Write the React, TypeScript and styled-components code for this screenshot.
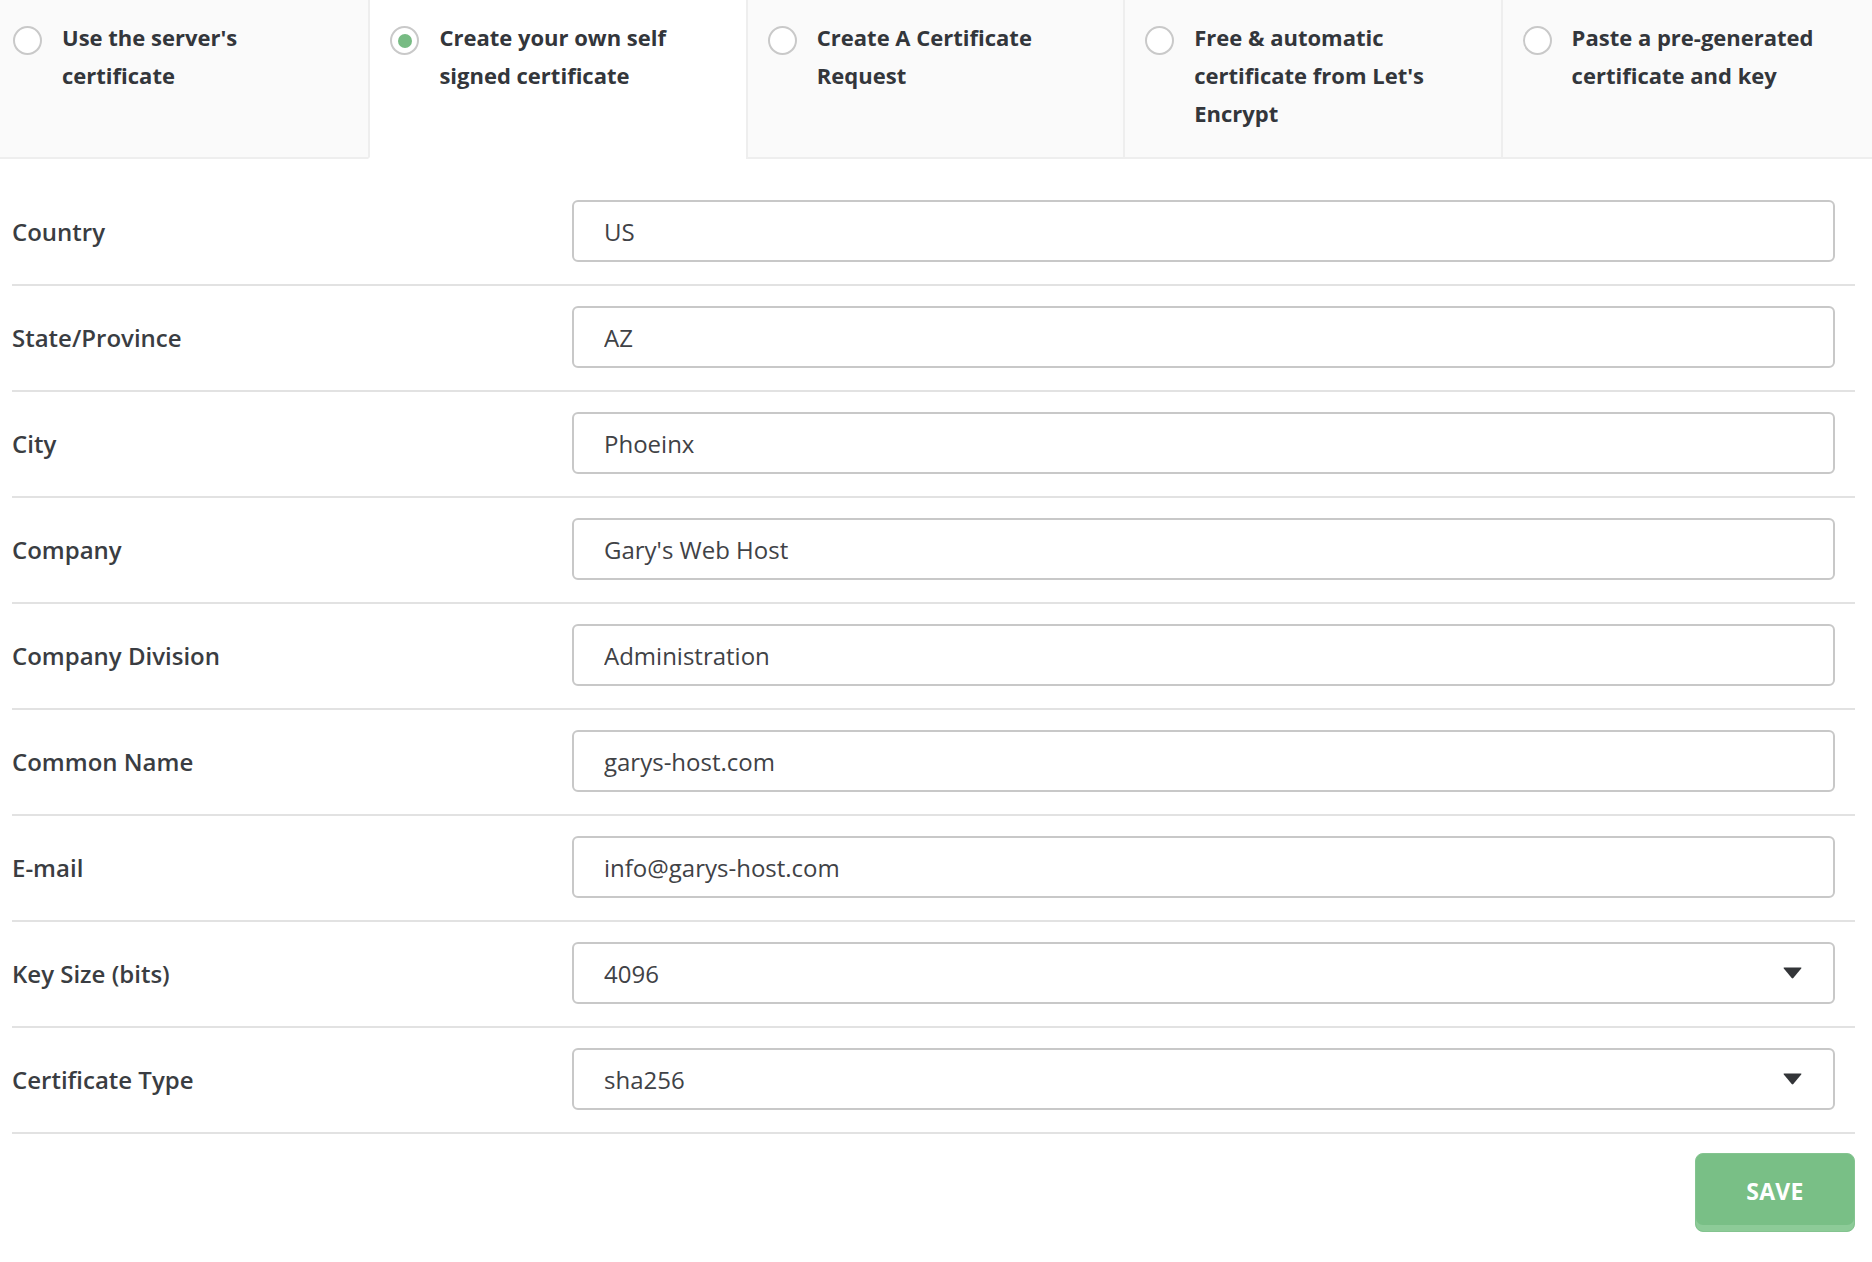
import React from "react";
import styled, { createGlobalStyle } from "styled-components";

const Global = createGlobalStyle`
  html, body { margin: 0; padding: 0; background: #ffffff; overflow: hidden; }
  body { font-family: "Open Sans", "Noto Sans", "Liberation Sans", sans-serif; color: #35383d; }
  * { box-sizing: border-box; }
`;

const Page = styled.div`
  width: 1872px;
  display: flex;
  flex-direction: column;
`;

const Tabs = styled.div`
  display: grid;
  grid-template-columns: repeat(5, 1fr);
  margin: 0 -6px 0 -9px;
`;

const Tab = styled.label<{ $active?: boolean }>`
  display: flex;
  align-items: flex-start;
  gap: 20px;
  padding: 18px 30px 25px 20px;
  background: ${(p) => (p.$active ? "#ffffff" : "#fafafa")};
  border-left: 2px solid #eeeeee;
  border-bottom: 2px solid ${(p) => (p.$active ? "transparent" : "#eeeeee")};
  cursor: pointer;
`;

const Radio = styled.span<{ $checked?: boolean }>`
  flex: 0 0 29px;
  width: 29px;
  height: 29px;
  margin-top: 8px;
  border-radius: 50%;
  border: 2px solid #c9c9c9;
  background: #ffffff;
  display: flex;
  align-items: center;
  justify-content: center;
  &::after {
    content: "";
    width: 14px;
    height: 14px;
    border-radius: 50%;
    background: ${(p) => (p.$checked ? "#77bb83" : "transparent")};
  }
`;

const TabText = styled.span`
  font-size: 22px;
  line-height: 38px;
  font-weight: 700;
  color: #33363b;
`;

const Form = styled.div`
  display: flex;
  flex-direction: column;
  padding: 21px 17px 0 12px;
`;

const Row = styled.div`
  display: grid;
  grid-template-columns: 560px 1fr;
  align-items: center;
  padding: 20px 20px 22px 0;
  border-bottom: 2px solid #e2e2e2;
`;

const Label = styled.div`
  font-size: 24px;
  font-weight: 600;
  color: #3a3d42;
`;

const Input = styled.input`
  width: 100%;
  height: 62px;
  border: 2px solid #c8c8c8;
  border-radius: 6px;
  padding: 0 30px;
  font-family: inherit;
  font-size: 24px;
  color: #3f4246;
  background: #ffffff;
  outline: none;
`;

const Select = styled.div`
  width: 100%;
  height: 62px;
  border: 2px solid #c8c8c8;
  border-radius: 6px;
  padding: 0 31px 0 30px;
  font-size: 24px;
  color: #3f4246;
  background: #ffffff;
  display: flex;
  align-items: center;
  justify-content: space-between;
`;

const Actions = styled.div`
  display: flex;
  justify-content: flex-end;
  padding-top: 19px;
`;

const SaveButton = styled.button`
  width: 160px;
  height: 79px;
  border: 1px solid #84c490;
  border-radius: 8px;
  background: #79bf86;
  box-shadow: inset 0 -6px 0 #8dcb98;
  color: #ffffff;
  font-family: inherit;
  font-size: 23px;
  font-weight: 700;
  letter-spacing: 0.3px;
  padding: 0 0 4px;
  cursor: pointer;
`;

const Caret = () => (
  <svg width="19" height="12" viewBox="0 0 19 12" aria-hidden="true">
    <path d="M1.2 0.5 H17.8 Q19 0.5 18.2 1.5 L10.3 11 Q9.5 11.8 8.7 11 L0.8 1.5 Q0 0.5 1.2 0.5 Z" fill="#333538" />
  </svg>
);

const tabs = [
  "Use the server's certificate",
  "Create your own self signed certificate",
  "Create A Certificate Request",
  "Free & automatic certificate from Let's Encrypt",
  "Paste a pre-generated certificate and key",
];

type Field = { label: string; value: string; select?: boolean };

const fields: Field[] = [
  { label: "Country", value: "US" },
  { label: "State/Province", value: "AZ" },
  { label: "City", value: "Phoeinx" },
  { label: "Company", value: "Gary's Web Host" },
  { label: "Company Division", value: "Administration" },
  { label: "Common Name", value: "garys-host.com" },
  { label: "E-mail", value: "info@garys-host.com" },
  { label: "Key Size (bits)", value: "4096", select: true },
  { label: "Certificate Type", value: "sha256", select: true },
];

export default function App() {
  return (
    <Page>
      <Global />
      <Tabs>
        {tabs.map((t, i) => (
          <Tab key={t} $active={i === 1}>
            <Radio $checked={i === 1} />
            <TabText>{t}</TabText>
          </Tab>
        ))}
      </Tabs>
      <Form>
        {fields.map((f) => (
          <Row key={f.label}>
            <Label>{f.label}</Label>
            {f.select ? (
              <Select>
                <span>{f.value}</span>
                <Caret />
              </Select>
            ) : (
              <Input defaultValue={f.value} readOnly />
            )}
          </Row>
        ))}
        <Actions>
          <SaveButton>SAVE</SaveButton>
        </Actions>
      </Form>
    </Page>
  );
}
